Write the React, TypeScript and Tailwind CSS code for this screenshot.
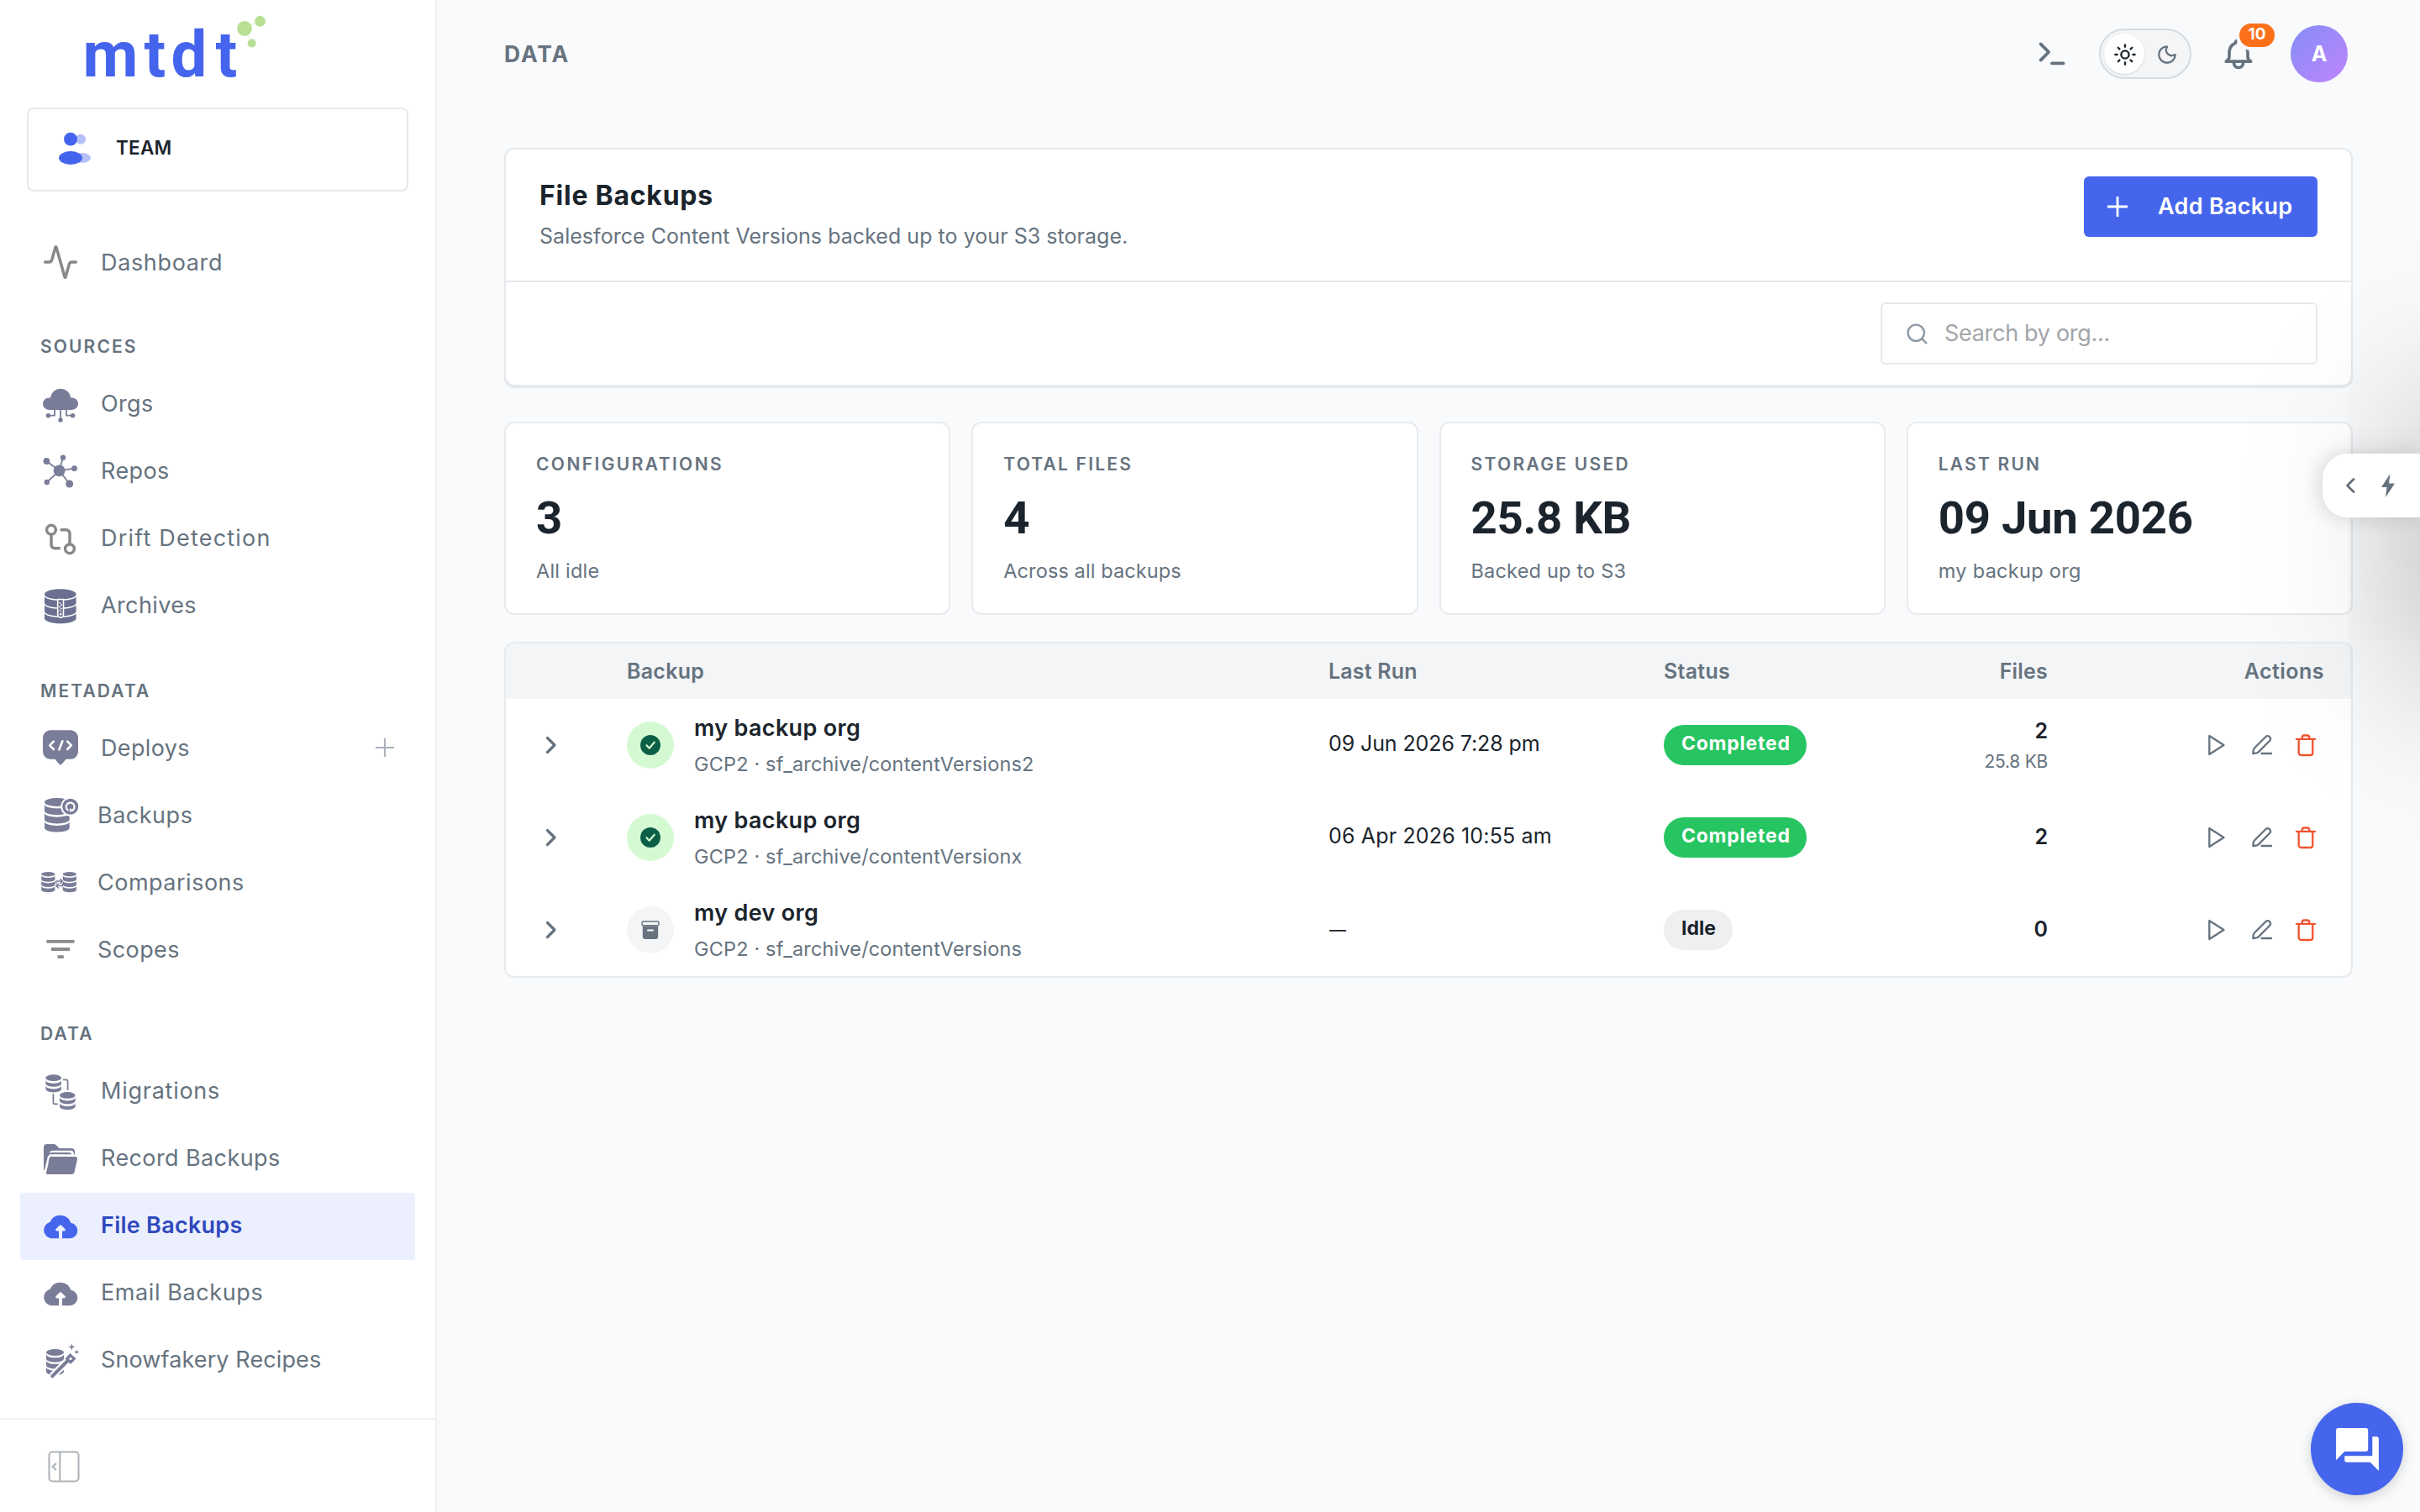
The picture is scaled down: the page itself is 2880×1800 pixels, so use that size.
import React, { useState } from 'react';
import clsx from 'clsx';
import { Activity, Moon, Search, Sun } from 'lucide-react';
import { MdForum } from 'react-icons/md';
import { TbBell, TbTerminal } from 'react-icons/tb';

/* ---------- icons ---------- */

interface StackProps {
  x: number;
  y: number;
  w: number;
  ry: number;
  bands: number;
  step: number;
  band: number;
}

// database cylinder: a lid and a few curved bands below it
function Stack({ x, y, w, ry, bands, step, band }: StackProps) {
  const rx = w / 2;
  return (
    <>
      <ellipse cx={x + rx} cy={y + ry} rx={rx} ry={ry} />
      {Array.from({ length: bands }, (_, i) => {
        const top = y + ry + (step - band) + i * step;
        return (
          <path
            key={i}
            d={`M${x} ${top}A${rx} ${ry} 0 0 0 ${x + w} ${top}v${band}A${rx} ${ry} 0 0 1 ${x} ${top + band}z`}
          />
        );
      })}
    </>
  );
}

function Icon({ children, className = 'text-[#7a7d98]' }: { children: React.ReactNode; className?: string }) {
  return (
    <svg viewBox="0 0 44 44" fill="currentColor" className={clsx('size-11 shrink-0 overflow-visible', className)}>
      {children}
    </svg>
  );
}

const OrgsIcon = () => (
  <Icon>
    <path d="M8.3 28a7.3 7.3 0 0 1 0-14.6h1.6a12.3 12.3 0 0 1 24.4 0h1.4a7.3 7.3 0 0 1 0 14.6z" />
    <path d="M15 27v7.7H7.5M22 27v13M29 27v7.7h7.5" fill="none" stroke="currentColor" strokeWidth="1.8" />
    <circle cx="7.4" cy="34.7" r="2.7" />
    <circle cx="22" cy="40" r="2.7" />
    <circle cx="36.6" cy="34.7" r="2.7" />
  </Icon>
);

const ReposIcon = () => (
  <Icon>
    <path
      d="M20.6 20.3 5.4 9M20.6 20.3 25 4.7M20.6 20.3l17.9-2.6M20.6 20.3 32.7 36M20.6 20.3 5.8 34"
      stroke="currentColor"
      strokeWidth="1.8"
    />
    <circle cx="20.6" cy="20.3" r="6.9" />
    <circle cx="5.4" cy="9" r="3.9" />
    <circle cx="25" cy="4.7" r="3.2" />
    <circle cx="38.5" cy="17.7" r="3.4" />
    <circle cx="32.7" cy="36" r="4.5" />
    <circle cx="5.8" cy="34" r="3.2" />
  </Icon>
);

const DriftIcon = () => (
  <Icon className="text-[#868889]">
    <g fill="none" stroke="currentColor" strokeWidth="3.5" strokeLinecap="round">
      <circle cx="11" cy="10.7" r="5.4" />
      <circle cx="33" cy="33.3" r="5.4" />
      <path d="M11 16.5v12a4.2 4.2 0 0 0 4.2 4.2h5.2M33 27.5V15a4.2 4.2 0 0 0-4.2-4.2H23" />
    </g>
  </Icon>
);

const ArchivesIcon = () => (
  <Icon className="text-[#6c7090]">
    <path d="M3 7.3C3 4 11.4 1.3 21.8 1.3S40.6 4 40.6 7.3v29c0 3.3-8.4 6-18.8 6S3 39.6 3 36.3z" />
    <path
      d="M2.5 8.6c1.5 3.2 9 5.4 19.3 5.4s17.8-2.2 19.3-5.4M2.5 18.6c1.5 3.2 9 5.4 19.3 5.4s17.8-2.2 19.3-5.4M2.5 28.6c1.5 3.2 9 5.4 19.3 5.4s17.8-2.2 19.3-5.4"
      fill="none"
      stroke="#fff"
      strokeWidth="1.4"
    />
    <path d="M18.7 13.5h6.8v18.2a3.4 3.4 0 0 1-6.8 0z" stroke="#fff" strokeWidth="1.6" />
    <path d="M21.3 17v12" stroke="#fff" strokeWidth="1.6" strokeDasharray="1.6 3" />
    <path d="M23 19.3v10" stroke="#fff" strokeWidth="1.6" strokeDasharray="1.6 3" />
    <circle cx="22.1" cy="31.3" r="1.3" fill="#fff" />
  </Icon>
);

const DeploysIcon = () => (
  <Icon>
    <path d="M10 1.3h24a9 9 0 0 1 9 9v16.5a9 9 0 0 1-9 9h-5.5l-4.7 5.8a2.3 2.3 0 0 1-3.6 0l-4.7-5.8H10a9 9 0 0 1-9-9V10.3a9 9 0 0 1 9-9z" />
    <path
      d="m13.8 14.6-4.6 4.7 4.6 4.7M24.3 14.3l-3.9 10M30.2 14.6l4.6 4.7-4.6 4.7"
      fill="none"
      stroke="#fff"
      strokeWidth="2.6"
      strokeLinecap="round"
      strokeLinejoin="round"
    />
  </Icon>
);

const BackupsIcon = () => (
  <Icon>
    <Stack x={3} y={2} w={29.7} ry={5} bands={3} step={10.2} band={7.7} />
    <circle cx="33.7" cy="12.3" r="11.4" fill="#fff" />
    <circle cx="33.7" cy="12.3" r="9.5" />
    <path d="M30.7 16.4a4.9 4.9 0 1 1 6.2-.2" fill="none" stroke="#fff" strokeWidth="2.2" strokeLinecap="round" />
    <path d="m33.2 14 4.6 3.6-4.8 1z" fill="#fff" />
  </Icon>
);

const ComparisonsIcon = () => (
  <Icon>
    <Stack x={-0.8} y={10} w={16.2} ry={2.7} bands={3} step={6.3} band={4.6} />
    <Stack x={24.7} y={10} w={16.2} ry={2.7} bands={3} step={6.3} band={4.6} />
    <g fill="none" stroke="currentColor" strokeWidth="1.4">
      <path d="M16.8 24v-3h7M21.3 18l3 3-3 3M24.3 23.5v3h-7M19.8 23.5l-3 3 3 3" />
    </g>
  </Icon>
);

const ScopesIcon = () => (
  <Icon className="text-[#8a8b8d]">
    <path d="M5.4 11h33.1v3.7H5.4zM11 20h22v4H11zM18.5 29.3h7.3V33h-7.3z" />
  </Icon>
);

const MigrationsIcon = () => (
  <Icon>
    <Stack x={4.4} y={1.3} w={18.6} ry={3.9} bands={2} step={6.7} band={4} />
    <Stack x={21} y={22} w={18.6} ry={3.9} bands={2} step={6.7} band={4} />
    <path
      d="M25 7.3h3.6a2 2 0 0 1 2 2v10.5M13.4 24.3v10a2 2 0 0 0 2 2h3.3"
      fill="none"
      stroke="currentColor"
      strokeWidth="1.8"
    />
  </Icon>
);

const FolderIcon = () => (
  <Icon>
    <path d="M2 36V8a4 4 0 0 1 4-4h7.5c1.5 0 2.800.6 3.9 1.7l3 3.300H35c2.200 0 4 1.500 4 3.500V17H13z" />
    <path d="M6.600 27 9 14.600a3.600 3.600 0 0 1 3.500-2.900h21.800a3.500 3.500 0 0 1 3.500 3.500V18H8.800z" fill="#fff" />
    <path d="M8 17.300c.3-2 1.500-3.200 3.500-3.200H32c1.700 0 3 1 3.400 2.900l-1.600-.6H10.600z" />
    <path d="M4.300 34.500 8 19l2.500-1.600 29.500.2" fill="none" stroke="#fff" strokeWidth="2.2" />
    <path d="M12.800 19h27a2.300 2.300 0 0 1 2.200 2.900l-3.400 15.300a3.600 3.600 0 0 1-3.500 2.800H6.800A1.800 1.800 0 0 1 5 37.800l3.900-15.900A3.900 3.900 0 0 1 12.800 19z" />
  </Icon>
);

const CloudUpIcon = ({ active }: { active?: boolean }) => (
  <Icon className={active ? 'text-[#4566ec]' : 'text-[#7a7d98]'}>
    <path d="M10.5 36.300A10 10 0 0 1 9.600 16.800 13.200 13.200 0 0 1 34.200 17.800a9.300 9.300 0 0 1-.8 18.500z" />
    <path
      d="M22 20.300c.5 0 1 .2 1.400.6l4 4a1.500 1.500 0 0 1-1.100 2.600H24v8.900h-4v-8.900h-2.300a1.500 1.500 0 0 1-1.100-2.600l4-4c.4-.4.9-.6 1.400-.6z"
      fill={active ? '#eceffe' : '#fff'}
    />
  </Icon>
);

const RecipesIcon = () => (
  <Icon>
    <Stack x={5} y={8} w={21} ry={4} bands={3} step={7.7} band={5.4} />
    <path d="M12 40.5 33 19.5" stroke="#fff" strokeWidth="8.5" />
    <path d="M12.2 40.3 31 21.5" stroke="currentColor" strokeWidth="4" strokeLinecap="round" />
    <path d="m28.5 19.5 5-5.5 6 5.5-5.5 5.5z" strokeLinejoin="round" stroke="currentColor" strokeWidth="1.5" />
    <circle cx="34" cy="19.5" r="1.6" fill="#fff" />
    <path d="m35.4 1.2 1 3.2 3.2 1-3.2 1-1 3.2-1-3.2-3.2-1 3.2-1zM41.2 8.6l.8 2.2 2.2.8-2.2.8-.8 2.200-.8-2.200-2.200-.8 2.200-.8z" />
  </Icon>
);

const PlusIcon = ({ className }: { className?: string }) => (
  <svg viewBox="0 0 24 24" className={className} fill="none" stroke="currentColor">
    <path d="M12 0v24M0 12h24" />
  </svg>
);

/* ---------- data ---------- */

interface NavItem {
  label: string;
  icon: React.ReactNode;
  tracking: string;
  tight?: boolean;
  add?: boolean;
}

interface NavSection {
  title: string;
  head: string;
  labelPad: string;
  items: NavItem[];
}

const sections: NavSection[] = [
  {
    title: 'SOURCES',
    head: 'h-[90px] pt-[31px]',
    labelPad: 'pb-[3px]',
    items: [
      { label: 'Orgs', icon: <OrgsIcon />, tracking: 'tracking-[0.36px]' },
      { label: 'Repos', icon: <ReposIcon />, tracking: 'tracking-[0.4px]' },
      { label: 'Drift Detection', icon: <DriftIcon />, tracking: 'tracking-[1.2px]' },
      { label: 'Archives', icon: <ArchivesIcon />, tracking: 'tracking-[0.38px]' },
    ],
  },
  {
    title: 'METADATA',
    head: 'h-[88px] pt-[33px]',
    labelPad: 'pt-px',
    items: [
      { label: 'Deploys', icon: <DeploysIcon />, tracking: 'tracking-[0.35px]', add: true },
      { label: 'Backups', icon: <BackupsIcon />, tracking: 'tracking-[0.51px]', tight: true },
      { label: 'Comparisons', icon: <ComparisonsIcon />, tracking: 'tracking-[0.5px]', tight: true },
      { label: 'Scopes', icon: <ScopesIcon />, tracking: 'tracking-[0.4px]', tight: true },
    ],
  },
  {
    title: 'DATA',
    head: 'h-[90px] pt-[31px]',
    labelPad: 'pb-[3px]',
    items: [
      { label: 'Migrations', icon: <MigrationsIcon />, tracking: 'tracking-[0.75px]' },
      { label: 'Record Backups', icon: <FolderIcon />, tracking: 'tracking-[0.4px]' },
      { label: 'File Backups', icon: <CloudUpIcon active />, tracking: 'tracking-[0.26px]' },
      { label: 'Email Backups', icon: <CloudUpIcon />, tracking: 'tracking-[0.6px]' },
      { label: 'Snowfakery Recipes', icon: <RecipesIcon />, tracking: 'tracking-[0.11px]' },
    ],
  },
];

const stats = [
  { label: 'CONFIGURATIONS', labelClass: 'tracking-[2.4px]', value: '3', hint: 'All idle', hintClass: 'tracking-[0.2px]' },
  { label: 'TOTAL FILES', labelClass: 'tracking-[2.2px]', value: '4', hint: 'Across all backups', hintClass: 'tracking-[0.11px]' },
  { label: 'STORAGE USED', labelClass: 'tracking-[2.3px]', value: '25.8 KB', hint: 'Backed up to S3', hintClass: 'tracking-[0.2px]' },
  { label: 'LAST RUN', labelClass: 'tracking-[2.2px]', value: '09 Jun 2026', hint: 'my backup org', hintClass: 'tracking-[0.3px]' },
];

interface Backup {
  name: string;
  path: string;
  lastRun?: string;
  runClass?: string;
  done: boolean;
  files: number;
  size?: string;
}

const backups: Backup[] = [
  {
    name: 'my backup org',
    path: 'GCP2 · sf_archive/contentVersions2',
    lastRun: '09 Jun 2026 7:28 pm',
    runClass: '-tracking-[0.1px]',
    done: true,
    files: 2,
    size: '25.8 KB',
  },
  {
    name: 'my backup org',
    path: 'GCP2 · sf_archive/contentVersionx',
    lastRun: '06 Apr 2026 10:55 am',
    runClass: 'tracking-[0.16px]',
    done: true,
    files: 2,
  },
  { name: 'my dev org', path: 'GCP2 · sf_archive/contentVersions', done: false, files: 0 },
];

/* ---------- sidebar ---------- */

function NavRow({ item, active, labelPad }: { item: NavItem; active?: boolean; labelPad: string }) {
  return (
    <a
      className={clsx(
        'mx-6 flex h-20 items-center rounded-[4px] pl-[26px] pr-[25px] text-[27px]',
        active ? 'bg-[#eceffe] font-semibold text-[#2f49bd]' : 'text-[#66737f]',
      )}
    >
      {item.icon}
      <span className={clsx('leading-10', labelPad, item.tight ? 'ml-[22px]' : 'ml-[26px]', item.tracking)}>{item.label}</span>
      {item.add && <PlusIcon className="ml-auto size-[22px] stroke-[2.4] text-[#aab2ba]" />}
    </a>
  );
}

function Sidebar() {
  return (
    <aside className="flex w-[520px] shrink-0 flex-col border-r-2 border-[#eff2f5] bg-white">
      <svg viewBox="0 0 518 128" className="h-32 w-full">
        <text x="98.5 171.5 203.5 256.5" y="90.6" fontSize="76" className="fill-[#4564ed] font-['Roboto'] font-bold">
          mtdt
        </text>
        <path d="M291 33.7 309.6 25M291 33.7l8.6 17.6" stroke="#b9df95" strokeWidth=".5" />
        <circle cx="291" cy="33.9" r="8.9" fill="#b9df95" />
        <circle cx="309.6" cy="25.2" r="6.4" fill="#b9df95" />
        <circle cx="299.7" cy="51.5" r="5.1" fill="#b9df95" />
      </svg>

      <div className="mx-8 flex h-[100px] items-center rounded-lg border-2 border-[#e6eaed] pl-8">
        <svg viewBox="0 0 48 48" className="size-12">
          <g fill="#b6bff7">
            <circle cx="30" cy="11.7" r="6" />
            <ellipse cx="31.8" cy="34" rx="10.2" ry="6" />
          </g>
          <g fill="#4564ed">
            <circle cx="18" cy="11.7" r="7.9" />
            <ellipse cx="18" cy="34" rx="14" ry="7.9" />
          </g>
        </svg>
        <span className="ml-6 pb-[5px] text-[22.5px] font-semibold tracking-[0.22px] text-[#1b242c]">TEAM</span>
      </div>

      <nav className="mt-11 flex-1">
        <NavRow
          labelPad="pt-px"
          item={{
            label: 'Dashboard',
            icon: <Activity className="size-11 shrink-0 stroke-[1.9] text-[#86888b]" />,
            tracking: 'tracking-[0.65px]',
          }}
        />
        {sections.map((section) => (
          <div key={section.title}>
            <h3 className={clsx('flex items-center pl-12 text-[21px] font-semibold tracking-[2.12px] text-[#66737f]', section.head)}>
              {section.title}
            </h3>
            {section.items.map((item) => (
              <NavRow key={item.label} item={item} labelPad={section.labelPad} active={item.label === 'File Backups'} />
            ))}
          </div>
        ))}
      </nav>

      <div className="flex h-28 items-center border-t-2 border-[#eff1f4] pt-px pl-[57px]">
        <svg viewBox="0 0 38 38" className="size-[38px] text-[#aeb4ba]" fill="none" stroke="currentColor" strokeWidth="2.1">
          <rect x="1.5" y="1.5" width="35" height="35" rx="4" />
          <path d="M14.3 1.5v35" />
          <path d="m9.800 15-4 4 4 4" strokeWidth="2.4" />
        </svg>
      </div>
    </aside>
  );
}

/* ---------- header ---------- */

function Header() {
  const [dark, setDark] = useState(false);

  return (
    <header className="flex h-32 items-center pl-20 pr-[86px]">
      <h1 className="pt-px text-[26.5px] font-bold tracking-[1.9px] text-[#66737f]">DATA</h1>
      <TbTerminal className="mb-1 ml-auto size-[46px] text-[#66737f]" />
      <button
        onClick={() => setDark(!dark)}
        className="ml-[33px] flex h-[60px] w-[110px] items-center rounded-full border-2 border-[#d6dbe0] bg-[#f3f5f7] pl-1"
      >
        <span className="flex size-12 items-center justify-center rounded-full bg-white shadow-sm">
          <Sun className="ml-px mt-0.5 size-7 text-[#1b242c]" />
        </span>
        <span className="flex flex-1 items-center justify-center pt-0.5">
          <Moon className="size-[26px] stroke-[2.1] text-[#66737f]" />
        </span>
      </button>
      <div className="relative ml-[34px] size-11">
        <TbBell className="size-11 text-[#66737f]" />
        <span className="absolute -top-[14px] left-[23px] flex h-7 w-[42px] items-center justify-center rounded-full bg-[#fc7019] pb-px text-[19px] font-bold text-white ring-4 ring-[#f9fafc]">
          10
        </span>
      </div>
      <div className="ml-10 flex size-[68px] items-center justify-center rounded-full bg-linear-135 from-[#818cf8] to-[#c084fc] pt-px text-[25px] font-bold text-white">
        A
      </div>
    </header>
  );
}

/* ---------- table ---------- */

function StatusDot({ done }: { done: boolean }) {
  return (
    <span className={clsx('flex size-14 shrink-0 items-center justify-center rounded-full', done ? 'bg-[#d5fad3]' : 'bg-[#f3f5f7]')}>
      {done ? (
        <svg viewBox="0 0 24 24" className="size-6">
          <circle cx="12" cy="12" r="12" fill="#0b5f47" />
          <path
            d="m7.5 12.3 3.2 3.400 6-7"
            fill="none"
            stroke="#d5fad3"
            strokeWidth="2.2"
            strokeLinecap="round"
            strokeLinejoin="round"
          />
        </svg>
      ) : (
        <svg viewBox="0 0 22 22" className="size-[22px] text-[#66737f]">
          <rect x="1" y="1" width="20" height="4.8" rx="1.5" fill="none" stroke="currentColor" strokeWidth="1.5" />
          <path d="M1.8 6.5h18.4V19a3 3 0 0 1-3 3H4.8a3 3 0 0 1-3-3z" fill="currentColor" />
          <path d="M8 11.5h6" stroke="#fff" strokeWidth="2" strokeLinecap="round" />
        </svg>
      )}
    </span>
  );
}

const actionIcon = 'size-[30px] fill-none stroke-current stroke-[2.3]';

function RowActions() {
  return (
    <div className="flex items-center justify-end pr-[39px] text-[#66737f]">
      <button>
        <svg viewBox="0 0 30 30" className={actionIcon} strokeLinejoin="round">
          <path d="M6.3 4v22l17.2-11z" />
        </svg>
      </button>
      <button className="ml-6">
        <svg viewBox="0 0 30 30" className={actionIcon} strokeLinecap="round" strokeLinejoin="round">
          <path d="M19.3 5.2 6.2 18.3c-1 1-1.5 1.9-1.6 3.3L4.3 25l3.3-.3c1.4-.1 2.3-.6 3.3-1.6L24 10a3.1 3.1 0 0 0 0-4.8 3.2 3.2 0 0 0-4.7 0z" />
          <path d="M14.5 25H26" />
        </svg>
      </button>
      <button className="ml-[22px] text-[#ef5430]">
        <svg viewBox="0 0 30 30" className={actionIcon} strokeLinecap="round" strokeLinejoin="round">
          <path d="M4 7.9h22M10.7 7.5V6a2.5 2.5 0 0 1 2.5-2.5h3.6A2.5 2.5 0 0 1 19.3 6v1.5M6.7 8.2v16A2.8 2.8 0 0 0 9.5 27h11a2.8 2.8 0 0 0 2.8-2.8v-16" />
        </svg>
      </button>
    </div>
  );
}

const columns = 'grid grid-cols-[144px_835px_399px_276px_181px_1fr] items-center';

function BackupTable() {
  return (
    <section className="mt-8 overflow-hidden rounded-xl border-2 border-[#e8ebee] bg-white">
      <div className={clsx(columns, 'h-[66px] bg-[#f3f5f7] pt-0.5 text-[25px] font-semibold text-[#66737f]')}>
        <span />
        <span className="tracking-[0.25px]">Backup</span>
        <span className="tracking-[0.18px]">Last Run</span>
        <span className="tracking-[0.25px]">Status</span>
        <span className="text-right tracking-[0.2px]">Files</span>
        <span className="pr-8 text-right tracking-[0.46px]">Actions</span>
      </div>
      {backups.map((b) => (
        <div key={b.path} className={clsx(columns, 'h-[110px] text-[25px] text-[#1b242c]')}>
          <svg
            viewBox="0 0 20 24"
            className="ml-11 h-6 w-5"
            fill="none"
            stroke="#66737f"
            strokeWidth="3.2"
            strokeLinecap="round"
            strokeLinejoin="round"
          >
            <path d="m5.5 3.5 8.5 8.5-8.5 8.5" />
          </svg>
          <div className="flex items-center gap-6">
            <StatusDot done={b.done} />
            <div>
              <div className="text-[27px] leading-10 font-semibold tracking-[0.33px]">{b.name}</div>
              <div className="mt-[5px] text-[23.5px] leading-9 tracking-[0.15px] text-[#66737f]">{b.path}</div>
            </div>
          </div>
          {b.lastRun ? (
            <span className={clsx('pb-[3px]', b.runClass)}>{b.lastRun}</span>
          ) : (
            <span className="pl-px text-[20px]">—</span>
          )}
          <div className="flex">
            <span
              className={clsx(
                'flex h-12 items-center rounded-full pl-[21px] pb-[3px] text-[23px] font-bold',
                b.done ? 'w-[170px] bg-[#26c561] tracking-[0.75px] text-white' : 'w-[82px] bg-[#edeff1]',
              )}
            >
              {b.done ? 'Completed' : 'Idle'}
            </span>
          </div>
          <div className="text-right">
            <div className={clsx('leading-[38px] font-semibold', !b.size && 'pb-[3px]')}>{b.files}</div>
            {b.size && <div className="text-[21px] leading-[35px] -tracking-[0.27px] text-[#66737f]">{b.size}</div>}
          </div>
          <RowActions />
        </div>
      ))}
    </section>
  );
}

/* ---------- page ---------- */

export default function App() {
  const [search, setSearch] = useState('');

  return (
    <div className="relative flex h-[1800px] w-[2880px] overflow-hidden bg-[#f9fafc] font-['Inter',sans-serif]">
      <Sidebar />

      <div className="flex-1">
        <Header />

        <main className="px-20 pt-12">
          <section className="rounded-xl border-2 border-[#e5e9ed] bg-white shadow-[0_2px_0_#e5e9ed]">
            <div className="flex h-[158px] items-start justify-between border-b-2 border-[#e5e9ed] pl-10 pr-10">
              <div className="pt-[31px]">
                <h2 className="text-[32px] leading-[48px] font-bold tracking-[0.75px] text-[#1b242c]">File Backups</h2>
                <p className="mt-[2px] text-[25px] leading-[44px] tracking-[0.04px] text-[#66737f]">
                  Salesforce Content Versions backed up to your S3 storage.
                </p>
              </div>
              <button className="mt-8 flex h-[72px] w-[278px] items-center rounded-[6px] bg-[#4566ec] pl-7 text-[27px] font-semibold tracking-[0.3px] text-white">
                <PlusIcon className="mr-9 size-6 stroke-[2.8]" />
                Add Backup
              </button>
            </div>
            <div className="flex justify-end px-10 py-6">
              <label className="flex h-[74px] w-[520px] items-center rounded-[6px] border-2 border-[#e6eaed] pl-[27px]">
                <Search className="size-[29px] text-[#8e9aa6]" />
                <input
                  value={search}
                  onChange={(e) => setSearch(e.target.value)}
                  placeholder="Search by org..."
                  className="ml-[18px] flex-1 text-[27px] -tracking-[0.3px] outline-none placeholder:text-[#a2a6aa]"
                />
              </label>
            </div>
          </section>

          <section className="mt-[42px] grid grid-cols-4 gap-[25px]">
            {stats.map((s) => (
              <div key={s.label} className="h-[230px] rounded-xl border-2 border-[#e8ebee] bg-white pl-9 pt-[33px]">
                <div className={clsx('text-[21px] leading-8 font-semibold text-[#66737f]', s.labelClass)}>{s.label}</div>
                <div className="mt-[15px] font-['Roboto'] text-[54.5px] leading-[64px] font-bold -tracking-[0.3px] text-[#1b242c]">
                  {s.value}
                </div>
                <div className={clsx('mt-[14px] text-[23.5px] leading-9 text-[#66737f]', s.hintClass)}>{s.hint}</div>
              </div>
            ))}
          </section>

          <BackupTable />
        </main>
      </div>

      {/* drawer parked past the right edge, only its shadow shows */}
      <div className="pointer-events-none absolute top-[480px] left-full h-[330px] w-[600px] shadow-[0_0_190px_rgba(0,0,0,0.34)]" />
      <button className="absolute top-[540px] right-0 flex h-[76px] w-[116px] items-center rounded-l-[30px] bg-white pl-[25px] text-[#66737f] shadow-[-4px_0_24px_rgba(0,0,0,0.14)]">
        <svg
          viewBox="0 0 16 24"
          className="h-6 w-4"
          fill="none"
          stroke="currentColor"
          strokeWidth="2.8"
          strokeLinecap="round"
          strokeLinejoin="round"
        >
          <path d="m12 4.5-7.5 7.5 7.5 7.5" />
        </svg>
        <svg viewBox="0 0 18 30" className="ml-[28px] h-[30px] w-[18px]" fill="currentColor">
          <path d="M11.5 1 1 17h6.5L6 29l11-16.5h-7z" />
        </svg>
      </button>

      <button className="absolute right-5 bottom-5 flex size-[110px] items-center justify-center rounded-full bg-[#4566ec] shadow-[0_4px_14px_rgba(0,0,0,0.16)]">
        <MdForum className="size-[61px] text-white" />
      </button>
    </div>
  );
}
